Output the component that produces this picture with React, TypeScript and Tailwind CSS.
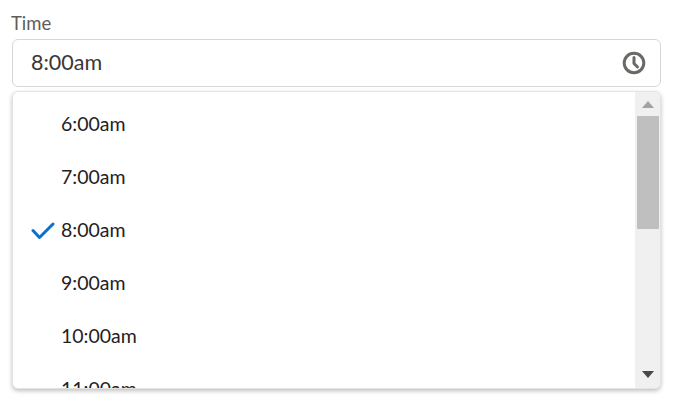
import React from 'react';

const times = ['6:00am', '7:00am', '8:00am', '9:00am', '10:00am', '11:00am'];

export default function App() {
  return (
    <div className="w-[673px] h-[403px] bg-white overflow-hidden px-3 pt-[13px] font-['Lato','Noto_Sans',sans-serif]">
      <label className="block -ml-px text-[18.5px] leading-[20px] text-[#5f5c59] mb-[6px]">Time</label>
      <div className="h-[48px] rounded-[6px] border border-[#d9d7d5] flex items-center justify-between pl-[18px] pr-[15px]">
        <span className="text-[21.5px] leading-[28px] -mt-[3px] text-[#3a3735]">8:00am</span>
        <svg className="w-[24px] h-[24px] -mr-px" viewBox="0 0 24 24" fill="none" stroke="#6b6966" strokeWidth={3}>
          <circle cx="12" cy="12" r="9.8" />
          <path d="M12 6.5V12.5L15.5 16" strokeLinecap="round" strokeLinejoin="round" />
        </svg>
      </div>
      <div className="mt-1 h-[298px] rounded-[6px] border border-[#e5e3e1] bg-white shadow-[0_2px_4px_rgba(0,0,0,0.25)] flex overflow-hidden">
        <ul className="flex-1 pt-[6px] overflow-hidden">
          {times.map((t) => (
            <li key={t} className="h-[53px] shrink-0 flex items-center">
              <span className="w-[48px] flex justify-end pr-[6px]">
                {t === '8:00am' && (
                  <svg className="w-[24px] h-[18px]" viewBox="0 0 24 18" fill="none" stroke="#0b6fce" strokeWidth={3} strokeLinecap="round" strokeLinejoin="round">
                    <path d="M2 8.5L8.5 15.5L22 2" />
                  </svg>
                )}
              </span>
              <span className="text-[19.5px] -mt-px text-[#24211f]">{t}</span>
            </li>
          ))}
        </ul>
        <div className="w-[25px] bg-[#f0f0f0] flex flex-col items-center">
          <svg className="w-[12px] h-[7px] mt-[9px] mb-[8px]" viewBox="0 0 12 7">
            <path d="M6 0L12 7H0Z" fill="#a3a3a3" />
          </svg>
          <div className="w-[22px] h-[113px] bg-[#bfbfbf]" />
          <svg className="w-[12px] h-[7px] mt-auto mb-[10px]" viewBox="0 0 12 7">
            <path d="M0 0H12L6 7Z" fill="#484848" />
          </svg>
        </div>
      </div>
    </div>
  );
}
